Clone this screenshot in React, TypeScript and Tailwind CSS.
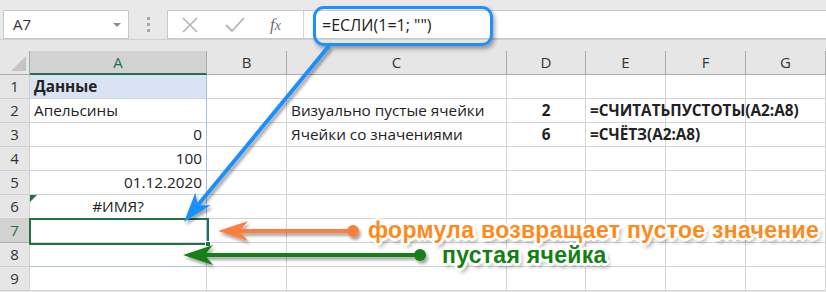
import React from "react";

const cols = [177, 80, 220, 79, 80, 80, 80];
const letters = ["A", "B", "C", "D", "E", "F", "G"];

type Cell = { text?: string; align?: "left" | "right" | "center"; bold?: boolean };

const data: Record<string, Cell> = {
  "1-0": { text: "Данные", bold: true },
  "2-0": { text: "Апельсины" },
  "3-0": { text: "0", align: "right" },
  "4-0": { text: "100", align: "right" },
  "5-0": { text: "01.12.2020", align: "right" },
  "6-0": { text: "#ИМЯ?", align: "center" },
  "2-2": { text: "Визуально пустые ячейки" },
  "3-2": { text: "Ячейки со значениями" },
  "2-3": { text: "2", align: "center", bold: true },
  "3-3": { text: "6", align: "center", bold: true },
  "2-4": { text: "=СЧИТАТЬПУСТОТЫ(A2:A8)", bold: true },
  "3-4": { text: "=СЧЁТЗ(A2:A8)", bold: true },
};

function head(tip: [number, number], from: [number, number], len: number, half: number) {
  const dx = tip[0] - from[0];
  const dy = tip[1] - from[1];
  const l = Math.hypot(dx, dy);
  const ux = dx / l;
  const uy = dy / l;
  const px = -uy;
  const py = ux;
  const bx = tip[0] - ux * len;
  const by = tip[1] - uy * len;
  const nx = tip[0] - ux * len * 0.72;
  const ny = tip[1] - uy * len * 0.72;
  return {
    d: `M${tip[0]},${tip[1]} L${bx + px * half},${by + py * half} L${nx},${ny} L${bx - px * half},${by - py * half} Z`,
    end: [nx, ny] as [number, number],
  };
}

function Arrow({ from, tip, color, dot }: { from: [number, number]; tip: [number, number]; color: string; dot?: boolean }) {
  const h = head(tip, from, 30, 10);
  return (
    <g filter="url(#sh)">
      <line x1={from[0]} y1={from[1]} x2={h.end[0]} y2={h.end[1]} stroke={color} strokeWidth={4} />
      <path d={h.d} fill={color} />
      {dot && <circle cx={from[0]} cy={from[1]} r={6} fill={color} />}
    </g>
  );
}

const outline =
  "[text-shadow:2px_0_0_#fff,-2px_0_0_#fff,0_2px_0_#fff,0_-2px_0_#fff,2px_2px_0_#fff,-2px_-2px_0_#fff,2px_-2px_0_#fff,-2px_2px_0_#fff,3px_0_0_#fff,-3px_0_0_#fff,0_3px_0_#fff,0_-3px_0_#fff,3px_4px_4px_rgba(0,0,0,0.45)]";

export default function App() {
  const font = { fontFamily: '"Open Sans", "Noto Sans", sans-serif' };
  return (
    <div className="relative w-[826px] h-[292px] overflow-hidden bg-[#e6e6e6] text-[#222]" style={font}>
      {/* toolbar */}
      <div className="h-[40px] flex items-start pt-[10px] border-b border-[#d0d0d0] bg-[#e9e9e9]">
        <div className="ml-[3px] w-[126px] h-[29px] bg-white border border-[#c8c8c8] flex items-center pl-[9px] pr-[7px] text-[15px] text-[#333]">
          <span className="flex-1">A7</span>
          <span className="w-0 h-0 border-l-[4px] border-r-[4px] border-t-[4px] border-l-transparent border-r-transparent border-t-[#8a8a8a]" />
        </div>
        <div className="w-[38px] h-[29px] flex flex-col items-center justify-center gap-[3px]">
          <span className="w-[3px] h-[3px] bg-[#a8a8a8]" />
          <span className="w-[3px] h-[3px] bg-[#a8a8a8]" />
          <span className="w-[3px] h-[3px] bg-[#a8a8a8]" />
        </div>
        <div className="flex-1 h-[29px] bg-white border-y border-l border-[#c8c8c8] flex items-center">
          <div className="w-[136px] h-full flex items-center border-r border-[#d6d6d6]">
            <svg width="20" height="20" viewBox="0 0 20 20" className="ml-[12px]">
              <path d="M3 3 L17 17 M17 3 L3 17" stroke="#b4b4b4" strokeWidth="1.6" />
            </svg>
            <svg width="22" height="20" viewBox="0 0 22 20" className="ml-[24px]">
              <path d="M2 10 L8 16 L20 3" stroke="#b4b4b4" strokeWidth="1.8" fill="none" />
            </svg>
            <span className="ml-[24px] text-[17px] italic text-[#707070]" style={{ fontFamily: '"Liberation Serif", serif' }}>
              f<span className="text-[14px]">x</span>
            </span>
          </div>
          <span className="ml-[18px] text-[16px] text-[#222]">=ЕСЛИ(1=1; "")</span>
        </div>
      </div>
      <div className="h-[11px]" />

      {/* grid */}
      <div
        className="grid bg-white"
        style={{ gridTemplateColumns: `30px ${cols.map((c) => c + "px").join(" ")}`, gridAutoRows: "24px" }}
      >
        <div className="bg-[#e6e6e6] border-r border-b border-[#ababab] relative">
          <svg className="absolute right-[3px] bottom-[3px]" width="15" height="15">
            <path d="M15 0 L15 15 L0 15 Z" fill="#c4c4c4" />
          </svg>
        </div>
        {letters.map((l, i) => (
          <div
            key={l}
            className={
              i === 0
                ? "bg-[#d2d2d2] border-r border-[#ababab] border-b-2 border-b-[#217346] flex items-center justify-center text-[15px] text-[#217346]"
                : "bg-[#e6e6e6] border-r border-b border-[#ababab] flex items-center justify-center text-[15px] text-[#333]"
            }
          >
            {l}
          </div>
        ))}
        {Array.from({ length: 9 }).map((_, r) => {
          const row = r + 1;
          return (
            <React.Fragment key={row}>
              <div
                className={
                  row === 7
                    ? "bg-[#d2d2d2] border-r border-b border-[#ababab] flex items-center justify-center text-[15px] text-[#217346]"
                    : "bg-[#e6e6e6] border-r border-b border-[#d0d0d0] flex items-center justify-center text-[15px] text-[#333]"
                }
              >
                {row}
              </div>
              {cols.map((_, c) => {
                const cell = data[`${row}-${c}`];
                const inA = c === 0 && row <= 8;
                const cls = [
                  "relative flex items-center px-[4px] text-[15.3px] whitespace-nowrap border-b border-r",
                  inA ? "border-r-[#a9c0e4]" : "border-r-[#d4d4d4]",
                  c === 0 && row === 8 ? "border-b-[#a9c0e4]" : "border-b-[#d4d4d4]",
                  row === 1 && c === 0 ? "bg-[#dae3f3]" : "",
                  cell?.align === "right" ? "justify-end" : cell?.align === "center" ? "justify-center" : "justify-start",
                  cell?.bold ? "font-bold" : "",
                ].join(" ");
                return (
                  <div key={c} className={cls}>
                    {row === 6 && c === 0 && (
                      <svg className="absolute left-0 top-0" width="7" height="7">
                        <path d="M0 0 L7 0 L0 7 Z" fill="#217346" />
                      </svg>
                    )}
                    {cell?.text}
                  </div>
                );
              })}
            </React.Fragment>
          );
        })}
      </div>

      {/* selected cell A7 */}
      <div className="absolute left-[29px] top-[218px] w-[180px] h-[27px] border-2 border-[#217346]" />
      <div className="absolute left-[205px] top-[241px] w-[6px] h-[6px] bg-[#217346] border border-white" />

      {/* callout around formula */}
      <div className="absolute left-[313px] top-[6px] w-[180px] h-[40px] rounded-[11px] border-[3px] border-[#1e8fff] shadow-[2px_3px_4px_rgba(0,0,0,0.35)]" />

      <svg className="absolute left-0 top-0" width="826" height="292">
        <defs>
          <filter id="sh" x="-20%" y="-20%" width="140%" height="160%">
            <feDropShadow dx="2" dy="3" stdDeviation="1.8" floodColor="#000" floodOpacity="0.35" />
          </filter>
        </defs>
        <Arrow from={[329, 46]} tip={[184, 222]} color="#1e8fff" />
        <Arrow from={[353, 231]} tip={[218, 231]} color="#fd7f3c" dot />
        <Arrow from={[420, 255]} tip={[183, 255]} color="#137f13" dot />
      </svg>

      <div
        className={`absolute left-[368px] top-[215px] text-[23px] font-bold tracking-[0.3px] text-[#ff8a1c] whitespace-nowrap leading-[30px] ${outline}`}
        style={{ fontFamily: '"Liberation Sans", Arial, sans-serif' }}
      >
        формула возвращает пустое значение
      </div>
      <div
        className={`absolute left-[442px] top-[240px] text-[23px] font-bold tracking-[0.3px] text-[#138013] whitespace-nowrap leading-[30px] ${outline}`}
        style={{ fontFamily: '"Liberation Sans", Arial, sans-serif' }}
      >
        пустая ячейка
      </div>
    </div>
  );
}
